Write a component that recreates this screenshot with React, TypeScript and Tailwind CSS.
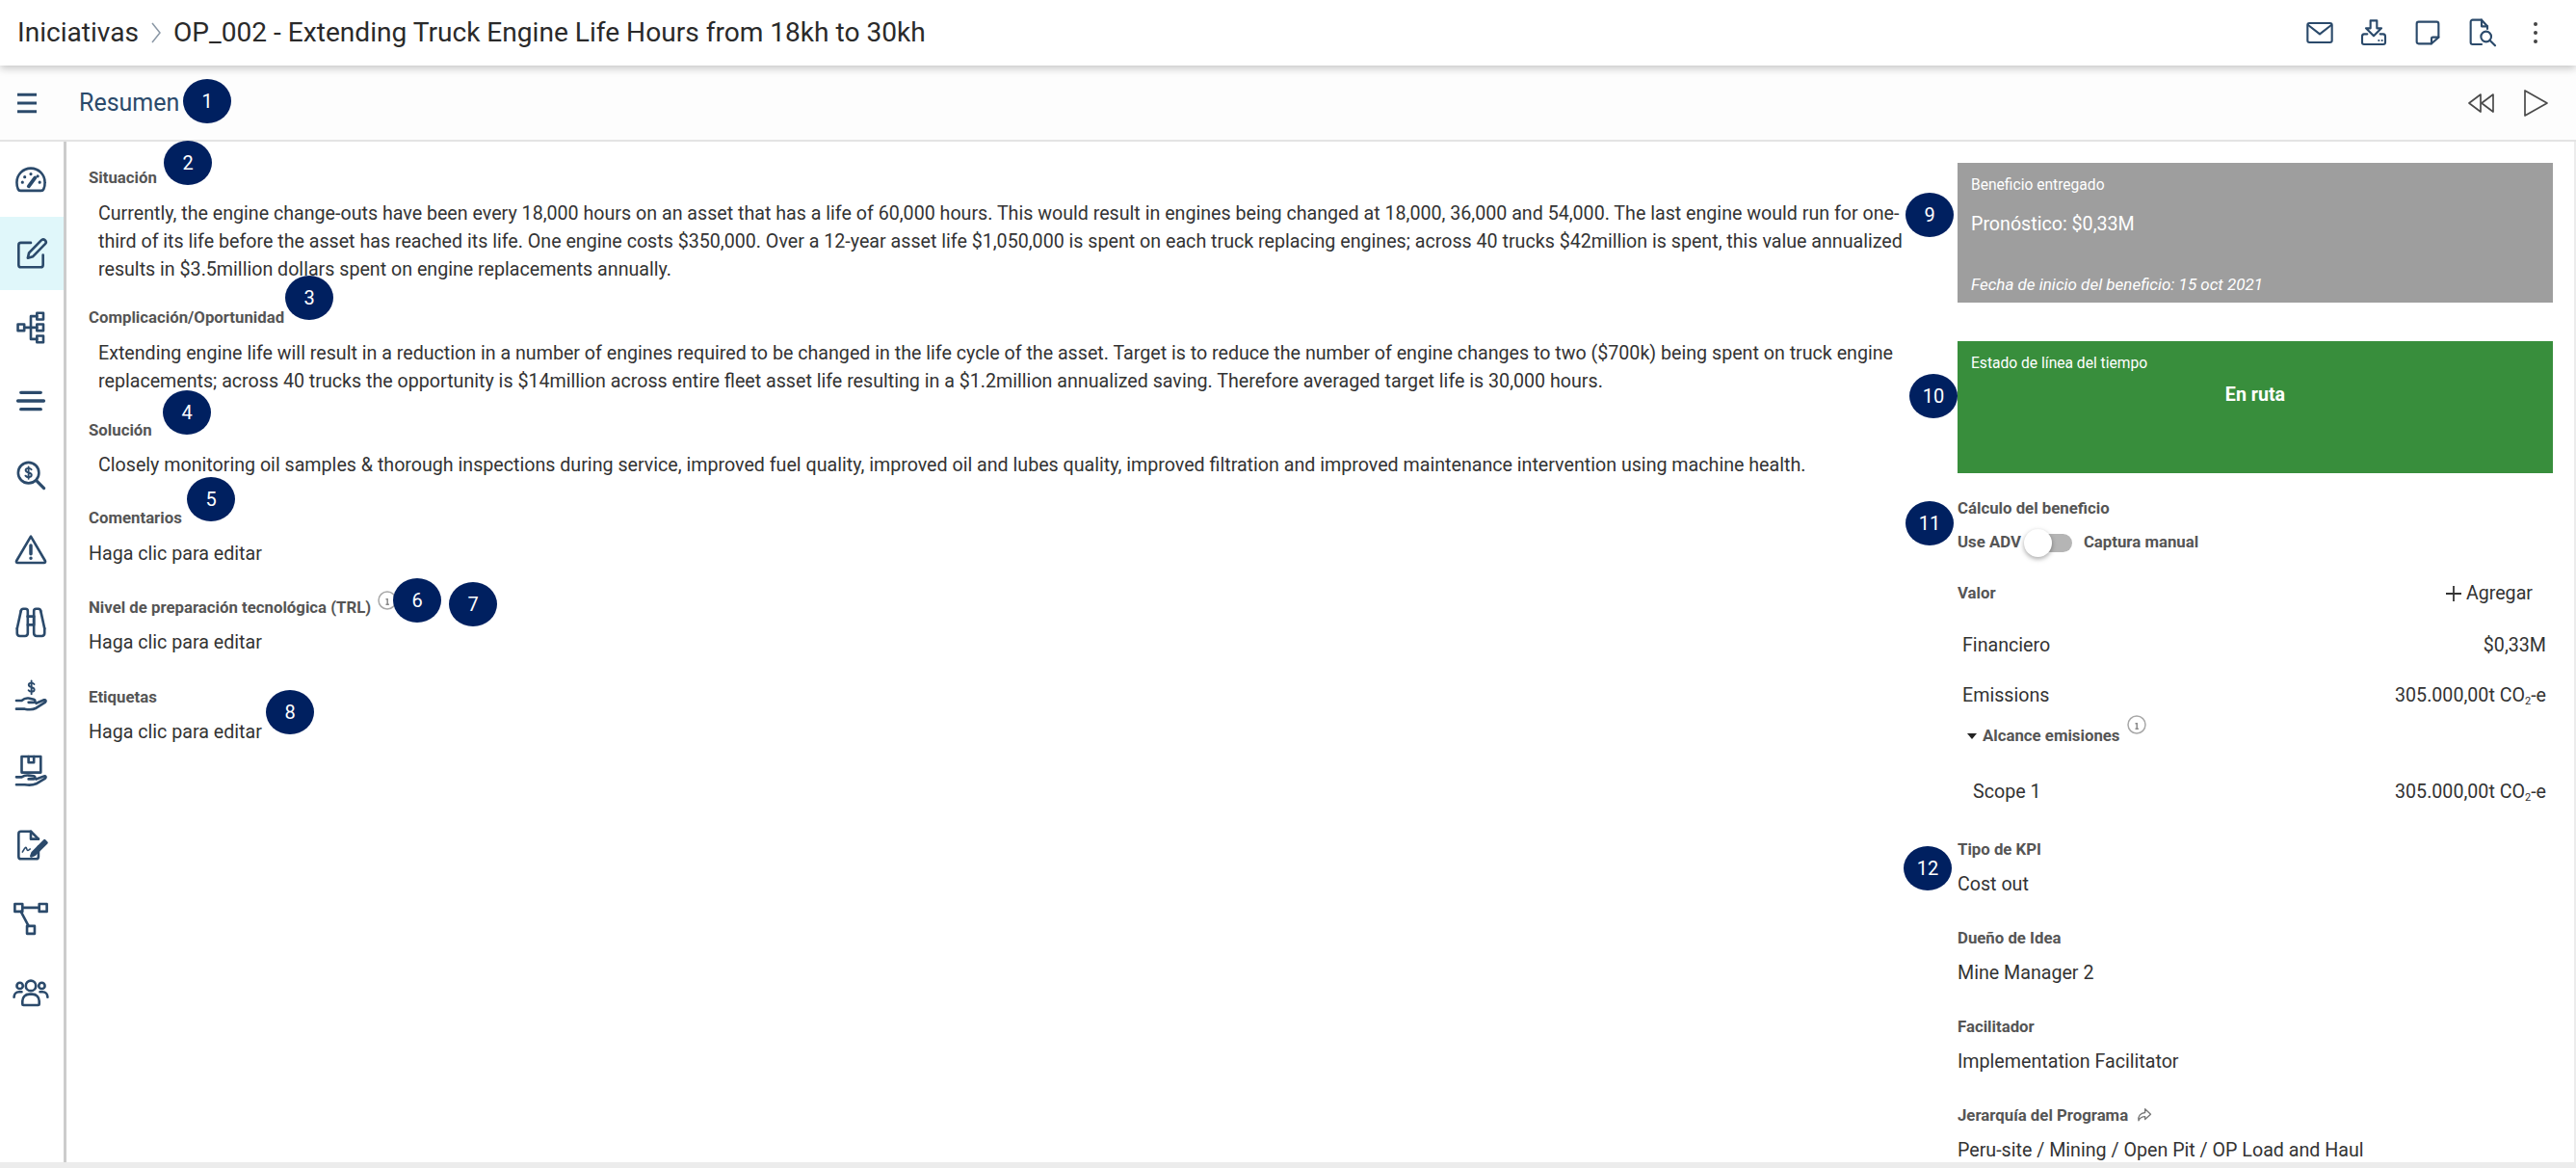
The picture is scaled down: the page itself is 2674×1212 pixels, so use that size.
import { Menu } from "lucide-react";

const navy = "#2b4a6b";

function Icon({ children, size = 32, color = navy, sw = 1.6 }: { children: React.ReactNode; size?: number; color?: string; sw?: number }) {
  return (
    <svg width={size} height={size} viewBox="0 0 24 24" fill="none" stroke={color} strokeWidth={sw} strokeLinecap="round" strokeLinejoin="round" className="shrink-0">
      {children}
    </svg>
  );
}

function Badge({ n, className }: { n: number; className: string }) {
  return (
    <div className={`absolute z-10 flex h-[46px] w-[50px] items-center justify-center rounded-[50%] bg-[#002060] text-[20px] text-white ${className}`}>
      {n}
    </div>
  );
}

const navIcons: React.ReactNode[] = [
  <>
    <path d="M5.2 19.5h13.6c.8 0 1.3-.4 1.6-1.1A9.4 9.4 0 0 0 21.2 14 9.2 9.2 0 0 0 2.8 14c0 1.6.3 3.1.8 4.4.3.7.8 1.1 1.6 1.1Z" />
    <path d="M10.6 16.6 14.8 11" strokeWidth="2.4" />
    <path d="M6.5 14h.01M8 10.5h.01M12 8.6h.01M16.5 10h.01M17.8 14h.01" strokeWidth="2" />
  </>,
  <>
    <path d="M12 5H5.5A1.5 1.5 0 0 0 4 6.5v13A1.5 1.5 0 0 0 5.5 21h13a1.5 1.5 0 0 0 1.5-1.5V13" />
    <path d="m10 15 .8-3.4 8-8.2a1.7 1.7 0 0 1 2.6 2.4l-8 8.2Z" />
  </>,
  <>
    <rect x="3.500" y="9.800" width="4.200" height="4.200" />
    <rect x="16" y="2.400" width="4.200" height="4.200" />
    <rect x="16" y="9.800" width="4.200" height="4.200" />
    <rect x="16" y="17.400" width="4.200" height="4.200" />
    <path d="M7.700 11.900H16M12 4.500h4M12 19.500h4M12 4.500v15" />
  </>,
  <path d="M5.500 6.500h13M3.500 12h17M5.500 17.500h13" strokeWidth="2.100" />,
  <>
    <circle cx="10.500" cy="10.500" r="6.800" />
    <path d="m15.600 15.600 5 5" strokeWidth="2" />
    <path d="M12.400 8.400c-.4-.6-1.100-.9-1.900-.9-1 0-1.900.5-1.900 1.400 0 2 3.900 1 3.900 3 0 .9-.9 1.500-2 1.500-.8 0-1.600-.4-2-1M10.500 6.600v7.800" strokeWidth="1.200" />
  </>,
  <>
    <path d="M12 3.500 2.600 19.600c-.3.600 0 1.200.7 1.200h17.400c.7 0 1-.6.7-1.200Z" />
    <path d="M12 9.500v5.500M12 17.800h.01" strokeWidth="2.200" />
  </>,
  <>
    <path d="M5.500 4.500c0-.8.7-1.500 1.500-1.500h1.600c.8 0 1.400.6 1.400 1.400V8M18.500 4.500c0-.8-.7-1.500-1.500-1.500h-1.600c-.8 0-1.400.6-1.400 1.400V8" />
    <path d="M10 8h4v5.500h-4M5.500 4.500 3 16M18.500 4.500 21 16" />
    <path d="M3 16v3c0 1 .8 1.800 1.800 1.800h3.400c1 0 1.800-.8 1.800-1.800V8M21 16v3c0 1-.8 1.800-1.800 1.800h-3.400c-1 0-1.800-.8-1.800-1.800V8" />
  </>,
  <>
    <path d="M14.200 3.800c-.4-.6-1-.9-1.800-.9-1 0-1.800.5-1.800 1.400 0 1.900 3.700 1 3.700 2.900 0 .9-.9 1.400-1.900 1.400-.8 0-1.500-.3-1.900-.9M12.400 1.600v8.600" strokeWidth="1.200" />
    <path d="M2.500 14.500h3.500c1.500-1.300 3-1.800 4.500-1.500l3.500.7c1 .2 1.200 1.800 0 2H10.500M2.500 20h5.500c3 .6 5.500.4 7.500-.6l6-3.900c.7-.6.2-1.700-.8-1.400l-5.200 2.200" />
  </>,
  <>
    <rect x="6" y="2.500" width="12.500" height="10.500" />
    <path d="M10.500 2.500v4h3.500v-4" />
    <path d="M2.500 16h3.500c1.500-1 3-1.300 4.500-1.100l3.500.5c1 .2 1.200 1.700 0 1.900H10.500M2.500 21h5.500c3 .5 5.500.3 7.500-.6l6-3.600c.7-.6.2-1.700-.8-1.400l-5.200 2" />
  </>,
  <>
    <path d="M17 13v6.500c0 .8-.6 1.500-1.500 1.500h-10C4.600 21 4 20.300 4 19.500v-15C4 3.600 4.600 3 5.500 3H12l5 5" />
    <path d="M12 3v5h5" />
    <path d="M6.500 16.500c1-1.800 1.800-3 2.300-3s.5 2 1.200 2 1-1 1.600-1" strokeWidth="1" />
    <path d="m13 17 8-8 1.400 1.400-8 8-2.200.8Z" fill={navy} />
  </>,
  <>
    <rect x="1.500" y="2.500" width="5" height="5" />
    <rect x="17.500" y="2.500" width="5" height="5" />
    <rect x="9.500" y="17" width="5" height="5" />
    <path d="M6.500 5h11M5.500 7.500l5 9.500" />
  </>,
  <>
    <circle cx="12" cy="7.500" r="3.300" />
    <circle cx="4.800" cy="7.500" r="2" />
    <circle cx="19.200" cy="7.500" r="2" />
    <path d="M6.500 19.500v-2c0-2.500 2-4.500 4.500-4.500h2c2.500 0 4.500 2 4.500 4.500v2c0 .4-.3.700-.7.700H7.200a.7.700 0 0 1-.7-.7Z" />
    <path d="M1 15c0-2 1.300-3.500 3.300-3.500H6M23 15c0-2-1.300-3.500-3.300-3.500H18" />
  </>,
];

function Label({ children, className = "" }: { children: React.ReactNode; className?: string }) {
  return <div className={`h-5 text-[16.800px] leading-5 font-bold text-[#555555] ${className}`}>{children}</div>;
}

function Info({ className = "" }: { className?: string }) {
  return (
    <svg width="22" height="22" viewBox="0 0 22 22" fill="none" className={`shrink-0 ${className}`}>
      <circle cx="11" cy="11" r="9" stroke="#a8a8a8" strokeWidth="1.500" />
      <path d="M11 6.500h.01M9.500 9.800H11.200V15M9.500 15.300h3.400" stroke="#8a8a8a" strokeWidth="1.500" />
    </svg>
  );
}

function Field({ label, value, icon }: { label: string; value: string; icon?: React.ReactNode }) {
  return (
    <div className="mt-[31px]">
      <Label className="flex items-center gap-[6px]">
        {label}
        {icon}
      </Label>
      <div className="mt-[13px] h-7 text-[19.650px] leading-7 text-[#333333]">{value}</div>
    </div>
  );
}

function Co2({ value }: { value: string }) {
  return (
    <span>
      {value}t CO<sub className="relative top-[3px] align-baseline text-[11px] leading-none">2</sub>-e
    </span>
  );
}

export default function App() {
  return (
    <div className="relative flex h-[1212px] w-[2674px] flex-col overflow-hidden bg-white font-['Roboto',sans-serif] text-[#333333]">
      <header className="relative z-[5] flex h-[68px] shrink-0 items-center justify-between bg-white pr-[26px] pl-[18px] shadow-[0_3px_8px_rgba(0,0,0,0.22)]">
        <div className="flex items-center text-[28.100px] text-[#2a2a2a]">
          <span>Iniciativas</span>
          <svg width="20" height="30" viewBox="0 0 20 30" fill="none" className="mx-[8px]">
            <path d="M6 5 14 15 6 25" stroke="#8a97a5" strokeWidth="1.500" />
          </svg>
          <span>OP_002 - Extending Truck Engine Life Hours from 18kh to 30kh</span>
        </div>
        <div className="flex items-center gap-6">
          <Icon>
            <rect x="2.500" y="4.500" width="19" height="15" rx="1.500" />
            <path d="m3 6 9 7 9-7" />
          </Icon>
          <Icon>
            <path d="M9.500 2.500h5v6H18l-6 6-6-6h3.500Z" />
            <path d="M7 13H4.500C3.500 13 3 14 3 15v4.500c0 .8.600 1.500 1.500 1.500h15c.9 0 1.500-.7 1.500-1.500V15c0-1-.5-2-1.500-2H17" />
            <path d="M16 18h.01M18.500 18h.01" />
          </Icon>
          <Icon>
            <path d="M5 3.500h14c.8 0 1.500.7 1.500 1.500v10.500L15 20.500H5c-.8 0-1.500-.7-1.500-1.500V5c0-.8.700-1.500 1.500-1.500Z" />
            <path d="M15 20.500v-4c0-.6.400-1 1-1h4.500" />
          </Icon>
          <Icon>
            <path d="M12 21H5c-.8 0-1.500-.7-1.500-1.500v-16C3.500 2.700 4.200 2 5 2h7l4.500 5v2" />
            <path d="M12 2v5h4.500" />
            <circle cx="15.500" cy="15" r="4" />
            <path d="m18.500 18 4 4" />
          </Icon>
          <div className="flex h-8 w-8 flex-col items-center justify-center gap-[5px]">
            <span className="h-[4px] w-[4px] rounded-full bg-[#444444]" />
            <span className="h-[4px] w-[4px] rounded-full bg-[#444444]" />
            <span className="h-[4px] w-[4px] rounded-full bg-[#444444]" />
          </div>
        </div>
      </header>

      <div className="flex h-[79px] shrink-0 items-center justify-between border-b-2 border-[#e4e4e4] bg-[#fdfdfd] pr-[26px] pl-[13px]">
        <div className="flex items-center gap-[39px]">
          <Menu size={30} color={navy} strokeWidth={2.400} strokeLinecap="butt" />
          <span className="text-[25px] text-[#2b4a6b]">Resumen</span>
        </div>
        <div className="flex items-center gap-6">
          <svg width="32" height="32" viewBox="0 0 32 32" fill="none" stroke="#4a4a4a" strokeWidth="1.700" strokeLinejoin="round">
            <path d="M15 7 3 16l12 9Z" />
            <path d="M28 7 16 16l12 9Z" />
          </svg>
          <svg width="32" height="32" viewBox="0 0 32 32" fill="none" stroke="#4a4a4a" strokeWidth="1.700" strokeLinejoin="round">
            <path d="M5 3v26l23-13Z" />
          </svg>
        </div>
      </div>

      <div className="flex min-h-0 flex-1 border-r-2 border-b-[6px] border-[#ececec]">
        <nav className="w-[69px] shrink-0 border-r-[3px] border-[#cccccc] pt-[1px]">
          {navIcons.map((icon, i) => (
            <div key={i} className={`flex h-[76.700px] items-center justify-center pr-[3px] ${i === 1 ? "bg-[#e0f7fa]" : ""}`}>
              <Icon size={38} sw={1.650}>{icon}</Icon>
            </div>
          ))}
        </nav>

        <main className="w-[1963px] shrink-0 pt-[27px] pl-[23px] text-[19.650px] leading-[29px] text-[#333333]">
          <Label>Situación</Label>
          <p className="mt-[13px] w-[1890px] pl-[10px]">
            Currently, the engine change-outs have been every 18,000 hours on an asset that has a life of 60,000 hours. This would result in engines being changed at 18,000, 36,000 and 54,000. The last engine would run for one-third of its life before the asset has reached its life. One engine costs $350,000. Over a 12-year asset life $1,050,000 is spent on each truck replacing engines; across 40 trucks $42million is spent, this value annualized results in $3.5million dollars spent on engine replacements annually.
          </p>
          <Label className="mt-[25px]">Complicación/Oportunidad</Label>
          <p className="mt-[13px] w-[1890px] pl-[10px]">
            Extending engine life will result in a reduction in a number of engines required to be changed in the life cycle of the asset. Target is to reduce the number of engine changes to two ($700k) being spent on truck engine replacements; across 40 trucks the opportunity is $14million across entire fleet asset life resulting in a $1.2million annualized saving. Therefore averaged target life is 30,000 hours.
          </p>
          <Label className="mt-[26px]">Solución</Label>
          <p className="mt-[12px] w-[1890px] pl-[10px]">
            Closely monitoring oil samples &amp; thorough inspections during service, improved fuel quality, improved oil and lubes quality, improved filtration and improved maintenance intervention using machine health.
          </p>
          <Label className="mt-[30px]">Comentarios</Label>
          <p className="mt-[13px]">Haga clic para editar</p>
          <Label className="mt-[31px] flex items-center gap-[6px]">
            Nivel de preparación tecnológica (TRL)
            <Info className="-mt-[15px]" />
          </Label>
          <p className="mt-[12px]">Haga clic para editar</p>
          <Label className="mt-[32px]">Etiquetas</Label>
          <p className="mt-[12px]">Haga clic para editar</p>
        </main>

        <aside className="w-[618px] shrink-0 pt-[22px]">
          <section className="h-[145px] bg-[#9e9e9e] px-[14px] text-white">
            <div className="pt-[13px] text-[15.600px] leading-5">Beneficio entregado</div>
            <div className="mt-[17px] text-[19.650px] leading-7">Pronóstico: $0,33M</div>
            <div className="mt-[38px] text-[17px] leading-5 italic">Fecha de inicio del beneficio: 15 oct 2021</div>
          </section>
          <section className="mt-10 h-[137px] bg-[#388e3c] px-[14px] text-white">
            <div className="pt-[13px] text-[15.600px] leading-5">Estado de línea del tiempo</div>
            <div className="mt-[11px] text-center text-[19.650px] leading-6 font-bold">En ruta</div>
          </section>

          <Label className="mt-[26px]">Cálculo del beneficio</Label>
          <div className="mt-[14px] flex h-6 items-center text-[16.800px] font-bold text-[#555555]">
            <span>Use ADV</span>
            <span className="relative mr-[12px] ml-[6px] h-[19px] w-[47px] rounded-full bg-[#b5b5b5]">
              <span className="absolute top-[-5px] left-[-3px] h-[29px] w-[29px] rounded-full bg-white shadow-[0_2px_5px_rgba(0,0,0,0.35)]" />
            </span>
            <span>Captura manual</span>
          </div>

          <div className="mt-[27px] flex h-7 items-center justify-between pr-[21px]">
            <span className="text-[16.800px] font-bold text-[#555555]">Valor</span>
            <span className="flex items-center gap-1 text-[19.650px] text-[#333333]">
              <svg width="18" height="18" viewBox="0 0 18 18" stroke="#333333" strokeWidth="1.800">
                <path d="M9 1v16M1 9h16" />
              </svg>
              Agregar
            </span>
          </div>
          <div className="mt-[26px] flex h-7 items-center justify-between pr-[7px] pl-[5px] text-[19.650px]">
            <span>Financiero</span>
            <span>$0,33M</span>
          </div>
          <div className="mt-[24px] flex h-7 items-center justify-between pr-[7px] pl-[5px] text-[19.650px]">
            <span>Emissions</span>
            <Co2 value="305.000,00" />
          </div>
          <div className="mt-[18px] flex h-5 items-center pl-[10px] text-[16.800px] font-bold text-[#555555]">
            <span className="mr-[6px] h-0 w-0 border-x-[5px] border-t-[6px] border-x-transparent border-t-[#222222]" />
            Alcance emisiones
            <Info className="-mt-[24px] ml-[6px]" />
          </div>
          <div className="mt-[34px] flex h-7 items-center justify-between pr-[7px] pl-4 text-[19.650px]">
            <span>Scope 1</span>
            <Co2 value="305.000,00" />
          </div>

          <div className="pt-[4px]">
            <Field label="Tipo de KPI" value="Cost out" />
            <Field label="Dueño de Idea" value="Mine Manager 2" />
            <Field label="Facilitador" value="Implementation Facilitator" />
            <Field
              label="Jerarquía del Programa"
              value="Peru-site / Mining / Open Pit / OP Load and Haul"
              icon={
                <svg width="20" height="20" viewBox="0 0 24 24" fill="none" stroke="#777777" strokeWidth="1.600" strokeLinejoin="round">
                  <path d="M14 4.500 21 11l-7 6.500V14c-4 0-6.500 1.500-8 5-1-5.500 2-9.500 8-10Z" />
                </svg>
              }
            />
          </div>
        </aside>
      </div>

      <Badge n={1} className="left-[190px] top-[82px]" />
      <Badge n={2} className="left-[170px] top-[146px]" />
      <Badge n={3} className="left-[296px] top-[286px]" />
      <Badge n={4} className="left-[169px] top-[405px]" />
      <Badge n={5} className="left-[194px] top-[495px]" />
      <Badge n={6} className="left-[408px] top-[600px]" />
      <Badge n={7} className="left-[466px] top-[604px]" />
      <Badge n={8} className="left-[276px] top-[716px]" />
      <Badge n={9} className="left-[1978px] top-[200px]" />
      <Badge n={10} className="left-[1982px] top-[388px]" />
      <Badge n={11} className="left-[1978px] top-[520px]" />
      <Badge n={12} className="left-[1976px] top-[878px]" />
    </div>
  );
}
